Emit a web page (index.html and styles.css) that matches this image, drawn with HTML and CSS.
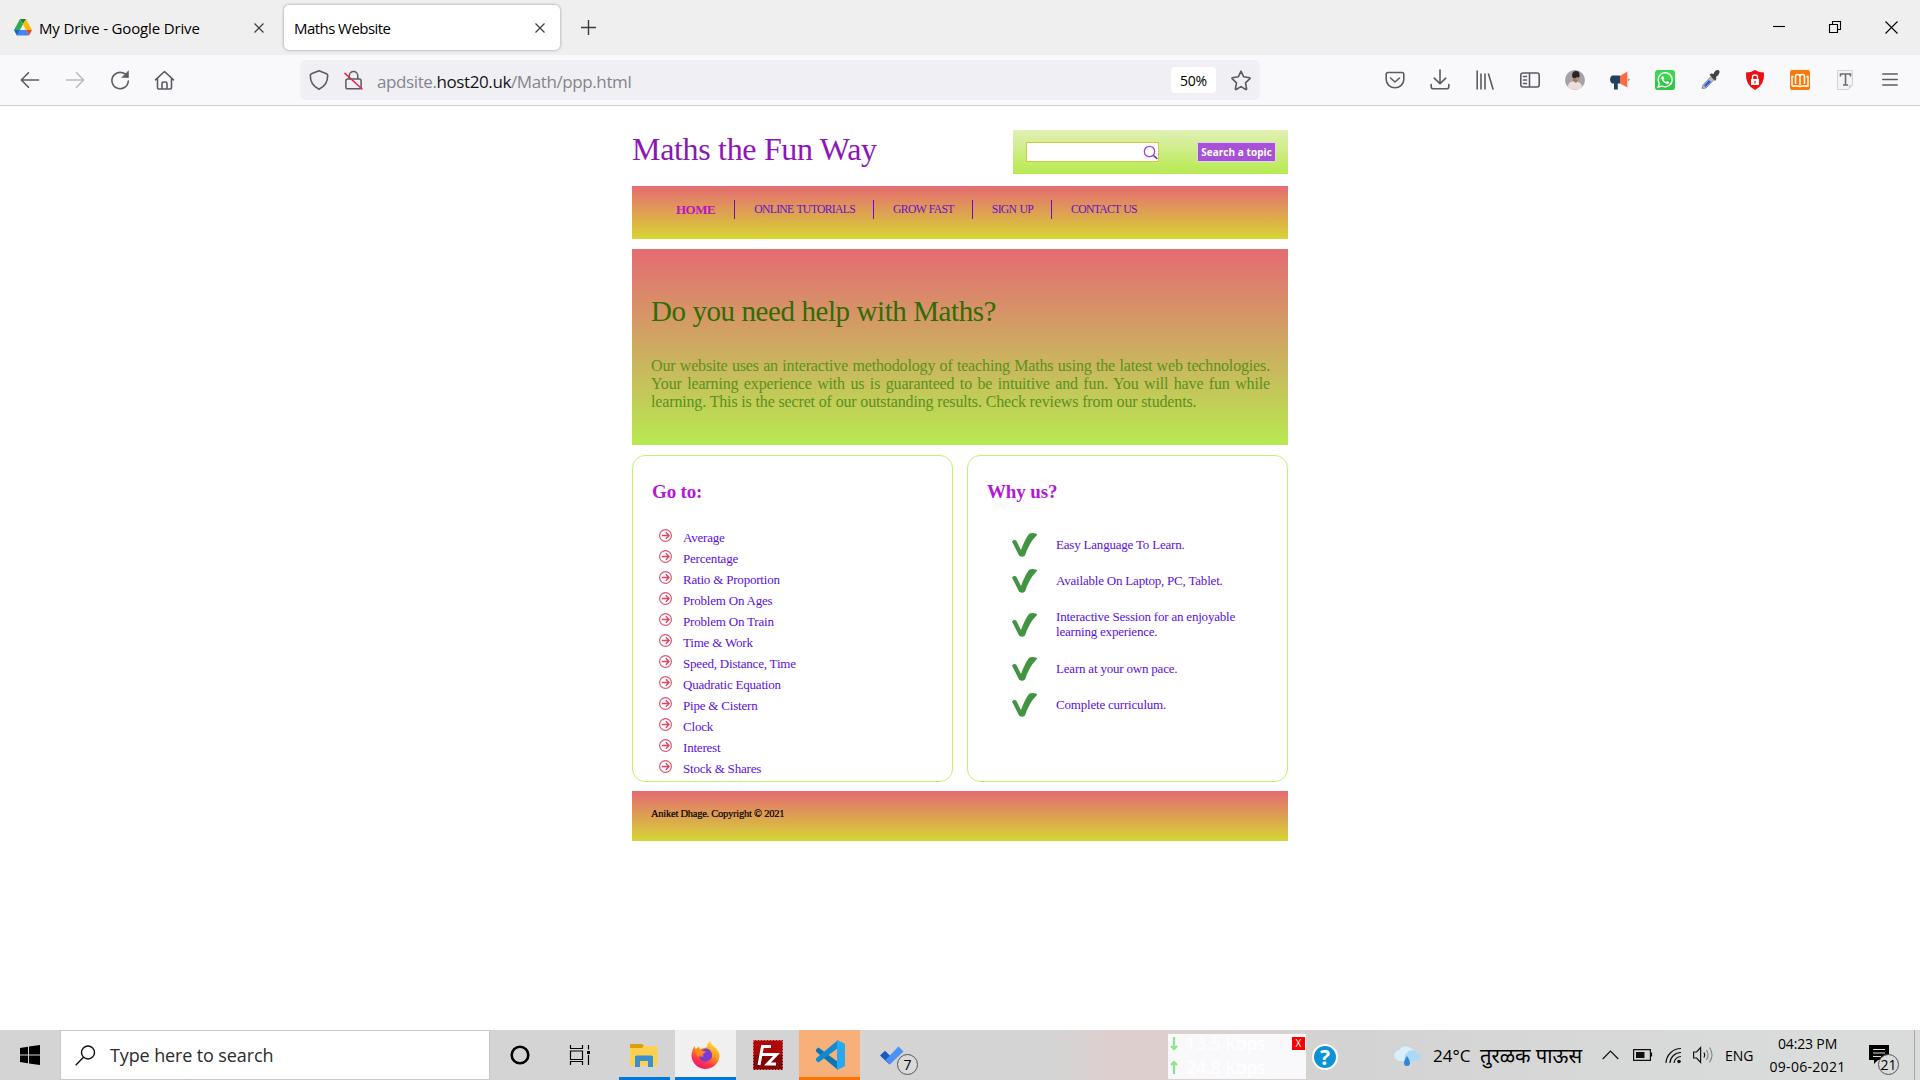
FILE: index.html
```html
<!DOCTYPE html>
<html lang="en">
<head>
<meta charset="utf-8">
<title>Maths Website</title>
<link rel="stylesheet" href="styles.css">
</head>
<body>
<svg width="0" height="0" class="defs">
  <symbol id="arrow" viewBox="0 0 13 13"><circle cx="6.500" cy="6.500" r="5.900" fill="none" stroke="#df5570" stroke-width="1.200"/><path d="M2.800 6.500h7M6.800 3.300l3.200 3.200-3.200 3.200" fill="none" stroke="#dc4664" stroke-width="1.400"/></symbol>
  <symbol id="check" viewBox="0 0 25 24"><path d="M0 8.500Q2 6.300 4.200 7.500L9 17Q13 6 17.200.8 20-.6 24.500.8q.9.700 0 1.700Q17 10 13 22.500q-.7 1.500-4.500 1Q7 23 6.500 21.500z" fill="#429442"/></symbol>
</svg>
<header class="tabstrip">
  <div class="tab tab-drive">
    <svg class="drive" width="18" height="17" viewBox="0 0 18 17"><path d="M6 0h6L9 5.300z" fill="#188038"/><path d="M6 0 0 11l3 5.500L9 5.300z" fill="#34a853"/><path d="M12 0l6 11h-6L9 5.300z" fill="#fbbc04"/><path d="M3 16.500 6 11h6l3 5.500z" fill="#4285f4"/><path d="M0 11h6l-3 5.500z" fill="#1967d2"/><path d="M12 11h6l-3 5.500z" fill="#ea4335"/></svg>
    <span class="tab-title">My Drive - Google Drive</span>
    <svg class="x" width="10" height="10" viewBox="0 0 10 10"><path d="M.5.5l9 9M9.500.5l-9 9"/></svg>
  </div>
  <div class="tab tab-active">
    <span class="tab-title">Maths Website</span>
    <svg class="x" width="10" height="10" viewBox="0 0 10 10"><path d="M.5.5l9 9M9.500.5l-9 9"/></svg>
  </div>
  <svg class="plus" width="15" height="15" viewBox="0 0 15 15"><path d="M7.500 0v15M0 7.500h15"/></svg>
  <div class="window-buttons">
    <svg width="12" height="12" viewBox="0 0 12 12"><path d="M0 5.500h12"/></svg>
    <svg width="12" height="12" viewBox="0 0 12 12"><path d="M.5 3.500h8v8h-8zM3.500 3.500v-3h8v8h-3"/></svg>
    <svg width="13" height="13" viewBox="0 0 13 13"><path d="M.5.5l12 12M12.500.5l-12 12"/></svg>
  </div>
</header>

<div class="toolbar">
  <div class="nav-buttons">
    <svg class="ic" viewBox="0 0 20 20"><path d="M18.500 10H1.300M8.500 2.800 1.300 10l7.200 7.200"/></svg>
    <svg class="ic dim" viewBox="0 0 20 20"><path d="M1.500 10h17.200M11.500 2.800l7.200 7.200-7.200 7.200"/></svg>
    <svg class="ic" viewBox="0 0 20 20"><path d="M17.500 7A8.200 8.200 0 1 0 18.300 11"/><path d="M18.500 1v6.500H12z" class="solid"/></svg>
    <svg class="ic" viewBox="0 0 20 20"><path d="M.5 9.800 9.500 1.500l9 8.300M2.500 8.500v9.300q0 1.200 1.200 1.200h11.600q1.200 0 1.200-1.200V8.500M7 19v-5.500q0-1.500 1.500-1.500h2q1.500 0 1.500 1.500V19"/></svg>
  </div>
  <div class="urlbar">
    <svg class="ic shield" viewBox="0 0 20 20"><path d="M10 .8l7.500 3q1.200.5 1.200 1.800c0 6-2.700 11-8.700 13.600C4 16.600 1.300 11.600 1.300 5.600q0-1.300 1.200-1.800z"/></svg>
    <svg class="ic lock" viewBox="0 0 20 20"><path d="M5.500 9V5.500a4.500 4.500 0 0 1 9 0V9M4 9h12q2 0 2 2v6.500q0 1.800-2 1.800H4q-2 0-2-1.800V11q0-2 2-2z"/><path d="M1 3l18 16.500" class="slash"/></svg>
    <span class="url">apdsite.<b>host20.uk</b>/Math/ppp.html</span>
    <span class="zoom">50%</span>
    <svg class="ic star" viewBox="0 0 20 20"><path d="M10 1.200l2.700 5.600 6 .9q.6.300.2.900l-4.400 4.200 1.100 6.200q-.1.600-.8.500L10 16.600l-4.800 2.900q-.7.100-.8-.5l1.100-6.200L1.100 8.600q-.4-.6.200-.9l6-.9z"/></svg>
  </div>
  <div class="extensions">
    <svg class="ic" viewBox="0 0 20 20"><path d="M3 2.500h14q1.800 0 1.800 1.800v5.200a8.800 8.300 0 0 1-17.600 0V4.300Q1.200 2.500 3 2.500zM5.500 8l4.500 4 4.500-4"/></svg>
    <svg class="ic" viewBox="0 0 20 20"><path d="M10 0v13.500M4.200 8.200l5.800 5.500 5.800-5.500M1.200 14.500v2.200q0 2 2 2h13.600q2 0 2-2v-2.200"/></svg>
    <svg class="ic" viewBox="0 0 20 20"><path d="M2.200 1v18M6 4v15M10 4v15M13.500 4l4.500 15"/></svg>
    <svg class="ic" viewBox="0 0 20 20"><path d="M3 3h14q2.200 0 2.200 2.200v9.600q0 2.200-2.200 2.200H3Q.8 17 .8 14.800V5.200Q.8 3 3 3zM9.500 3v14M3.500 6.500h3M3.500 10h3M3.500 13.500h3"/></svg>
    <svg class="px" viewBox="0 0 20 20"><circle cx="10" cy="10" r="10" fill="#a4a3aa"/><path d="M3 17q0-4.500 4-5.500l4-1 3 2q3 1 3 4.500a10 10 0 0 1-14 0z" fill="#eadfdc"/><path d="M8 7h5v4l-2 2-3-2z" fill="#a37564"/><path d="M7 6q0-5 4-5t3.500 5l-.7 2H8z" fill="#2c2526"/><path d="M10.500 6.500h3.500v4h-2.500z" fill="#b98a78"/><path d="M10 5.500h4.200v1.800H10z" fill="#221f22"/></svg>
    <svg class="px" viewBox="0 0 20 20"><path d="M2 5.500h8v8H7.800v6H4v-6H2Q0 12 0 9.500t2-4z" fill="#25405c"/><path d="M10 6l7.500-4.500v16L10 13.500z" fill="#ff6a3a"/><path d="M18 1v18" stroke="#c7e9ff"/><path d="M18.500 8.500q2 1 0 2.500z" fill="#25405c"/></svg>
    <svg class="px" viewBox="0 0 20 20"><rect width="20" height="20" rx="3" fill="#3bd64b"/><path d="M0 10h20v7q0 3-3 3H3q-3 0-3-3z" fill="#27b93a" opacity=".55"/><path d="M3.200 17l1-3.600A7 7 0 1 1 7 16z" fill="none" stroke="#fff" stroke-width="1.400"/><path d="M7 6.500l1.200-.3 1 2.200-.8 1q1 1.800 2.700 2.500l.9-1 2.200 1-.2 1.300q-1.300 1.200-3.200.3Q7.500 12 6.500 9q-.3-1.500.5-2.500z" fill="#fff"/></svg>
    <svg class="px" viewBox="0 0 20 20"><path d="M2 18.500l1-3.500 8-8.500 3 3L6 18z" fill="#b8bac2" stroke="#8b8d96"/><path d="M4 15.500l5-5.500 2 2-5.500 5z" fill="#2a5ee0"/><path d="M9.500 4.500l2-1 2 .5q1.500-4 4-4t2 2.500-3.500 4.500l.3 2-1.300 2z" fill="#414247"/></svg>
    <svg class="px" viewBox="0 0 20 20"><path d="M10 0q4 2.500 9 2.500 1 12.500-9 17.500Q0 15 1 2.500 6 2.500 10 0z" fill="#ef0f12"/><path d="M6 9h8v6H6z" fill="#fff"/><path d="M7.500 9V7q0-2 2.500-2t2.500 2v2" fill="none" stroke="#fff" stroke-width="1.300"/><path d="M10 11v2.500" stroke="#ef0f12" stroke-width="1.200"/></svg>
    <svg class="px" viewBox="0 0 20 20"><rect width="20" height="20" rx="2" fill="#f97a06"/><path d="M2 16V6.500h1.500M16.500 6.500H18V16h-6.500l-1.500.7-1.500-.7H2M5.500 14V6q0-1.500 2.200-1.500T10 6v9M10 6q0-1.500 2.300-1.500T14.500 6v8" fill="none" stroke="#fff" stroke-width="1.500"/></svg>
    <svg class="px" viewBox="0 0 20 20"><path d="M2.500.5h15V15l-4 4.500h-11z" fill="#f4f4f4" stroke="#d2d2d2"/><path d="M13.500 19.500V15h4z" fill="#d5d5d5"/><path d="M5.500 6.500V4h10v2.500M10.500 4v11M8 15h5" fill="none" stroke="#686c73" stroke-width="1.600"/></svg>
    <svg class="ic" viewBox="0 0 20 20"><path d="M2.800 4h14.400M2.800 9.500h14.400M2.800 15h14.400"/></svg>
  </div>
</div>

<main class="viewport">
  <div class="page">
    <div class="masthead">
      <h1 class="site-title">Maths the Fun Way</h1>
      <div class="search">
        <div class="search-input"><svg width="14" height="15" viewBox="0 0 14 15"><circle cx="5.500" cy="6.500" r="5.200" fill="none" stroke="#9a47c9" stroke-width="1.300"/><path d="M9.500 10.500l1.500 1.500M11 11.500l2.300 2.500" fill="none" stroke="#7b22b8" stroke-width="1.500"/></svg></div>
        <div class="search-button">Search a topic</div>
      </div>
    </div>
    <nav class="menu">
      <a class="home">HOME</a><a>ONLINE TUTORIALS</a><a>GROW FAST</a><a>SIGN UP</a><a>CONTACT US</a>
    </nav>
    <section class="hero">
      <h2>Do you need help with Maths?</h2>
      <p><span>Our website uses an interactive methodology of teaching Maths using the latest web technologies.</span>
      <span>Your learning experience with us is guaranteed to be intuitive and fun. You will have fun while</span>
      <span class="last">learning. This is the secret of our outstanding results. Check reviews from our students.</span></p>
    </section>
    <div class="panels">
      <section class="panel">
        <h3>Go to:</h3>
        <ul class="topics">
          <li><svg><use href="#arrow"/></svg>Average</li>
          <li><svg><use href="#arrow"/></svg>Percentage</li>
          <li><svg><use href="#arrow"/></svg>Ratio &amp; Proportion</li>
          <li><svg><use href="#arrow"/></svg>Problem On Ages</li>
          <li><svg><use href="#arrow"/></svg>Problem On Train</li>
          <li><svg><use href="#arrow"/></svg>Time &amp; Work</li>
          <li><svg><use href="#arrow"/></svg>Speed, Distance, Time</li>
          <li><svg><use href="#arrow"/></svg>Quadratic Equation</li>
          <li><svg><use href="#arrow"/></svg>Pipe &amp; Cistern</li>
          <li><svg><use href="#arrow"/></svg>Clock</li>
          <li><svg><use href="#arrow"/></svg>Interest</li>
          <li><svg><use href="#arrow"/></svg>Stock &amp; Shares</li>
        </ul>
      </section>
      <section class="panel">
        <h3>Why us?</h3>
        <ul class="reasons">
          <li><svg><use href="#check"/></svg><span>Easy Language To Learn.</span></li>
          <li><svg><use href="#check"/></svg><span>Available On Laptop, PC, Tablet.</span></li>
          <li class="two"><svg><use href="#check"/></svg><span>Interactive Session for an enjoyable<br>learning experience.</span></li>
          <li><svg><use href="#check"/></svg><span>Learn at your own pace.</span></li>
          <li><svg><use href="#check"/></svg><span>Complete curriculum.</span></li>
        </ul>
      </section>
    </div>
    <footer class="foot">Aniket Dhage. Copyright © 2021</footer>
  </div>
</main>

<div class="taskbar">
  <div class="start"><svg width="20" height="20" viewBox="0 0 20 20"><path d="M0 3l8-1.200v7.700H0zM9 1.600 20 0v9.500H9zM0 10.500h8v7.700L0 17zM9 10.500h11V20L9 18.400z"/></svg></div>
  <div class="task-search">
    <svg width="21" height="21" viewBox="0 0 21 21"><circle cx="13" cy="7.500" r="6.500"/><path d="M8.500 12.200.7 20.300"/></svg>
    <span class="t-search">Type here to search</span>
  </div>
  <div class="cell"><svg width="20" height="20" viewBox="0 0 20 20"><circle cx="10" cy="10" r="8.300" fill="none" stroke="#000" stroke-width="2.600"/></svg></div>
  <div class="cell"><svg width="21" height="20" viewBox="0 0 21 20"><path d="M1.500 0v3.500h12V0M1.500 6h12v8.500h-12zM1.500 20v-3.500h12V20M19.500 0v4.500M19.500 10v10" fill="none" stroke="#000" stroke-width="1.200"/><path d="M18 6h3v3h-3z"/></svg></div>
  <div class="apps">
    <div class="app open narrow"><svg width="28" height="24" viewBox="0 0 28 24"><path d="M0 2q0-1 1-1h11l2 2-2 3H0z" fill="#e09c0a"/><path d="M0 5h12l2-2h12.500q1 0 1 1v18q0 1-1 1h-25.500q-1 0-1-1z" fill="#ffd04f"/><path d="M5 24V14q0-1.500 1.500-1.500h15q1.500 0 1.500 1.500v10h-5v-6h-8v6z" fill="#3a8fd0"/></svg></div>
    <div class="app open front"><svg width="29" height="29" viewBox="0 0 29 29"><defs><linearGradient id="ff" x1=".8" y1="0" x2=".3" y2="1"><stop offset="0" stop-color="#ffe83a"/><stop offset=".45" stop-color="#ff9220"/><stop offset=".75" stop-color="#ff3647"/><stop offset="1" stop-color="#e01681"/></linearGradient></defs><path d="M16 6q0-4 3-6 1 3 4 5.500 5.500 4 5.500 10A14 13.500 0 1 1 1 11q1-4 2.500-6 .3 2 1.300 3L8 5.500q0 2 1.500 2.500z" fill="url(#ff)"/><path d="M9 11q3-4 7-3.500 4.500 1.500 5 6t-4 6.500-8-2q-1-2 0-3 2 2 4 0z" fill="#7b3bd1"/><path d="M4 9q4-2 8 1 2 0 3 1-3 1.500-4 3-3 0-3 2-4-2-4-7z" fill="#ff8a20"/></svg></div>
    <div class="app"><svg width="30" height="30" viewBox="0 0 30 30"><rect width="30" height="30" fill="#ad0707"/><path d="M0 30V15h30v15z" fill="#820404"/><rect x=".5" y=".5" width="29" height="29" fill="none" stroke="#ebb" stroke-dasharray="1 2"/><path d="M6 25 9.500 6.500h8.500M7.500 14.500h7.500M14 14.500h9.500l-9 9.500h8.500" fill="none" stroke="#fff" stroke-width="3"/></svg></div>
    <div class="app alert"><svg width="30" height="30" viewBox="0 0 30 30"><path d="M1 9.500 3.500 7.500 23 22v8L1.500 12q-1-1.300-.5-2.500z" fill="#0877b9"/><path d="M1 20.500 3.500 22.500 23 8V0L1.500 18q-1 1.300-.5 2.500z" fill="#118bd0"/><path d="M22 0l7 3.300q1 .6 1 1.700v20q0 1.200-1 1.700L22 30z" fill="#28a8f0"/></svg></div>
    <div class="app"><svg width="24" height="19" viewBox="0 0 24 19"><path d="M0 9.500 5 4.700l9 9L9.500 18.500z" fill="#185abd"/><path d="M5.500 14 18.500.5 23.500 5.500 9.700 18.600z" fill="#4a92f5"/></svg><span class="badge">7</span></div>
  </div>
  <div class="netspeed">
    <div><svg width="8" height="13" viewBox="0 0 8 13"><path d="M4 0v10M1 9l3 3 3-3"/></svg><span>13.5 Kbps</span></div>
    <div><svg width="8" height="13" viewBox="0 0 8 13"><path d="M4 13V3M1 4l3-3 3 3"/></svg><span>24.8 Kbps</span></div>
    <span class="net-close">X</span>
  </div>
  <div class="help">?</div>
  <div class="weather">
    <svg width="26" height="21" viewBox="0 0 26 21"><path d="M6 16a5.500 5.500 0 0 1-.5-11A7 6.500 0 0 1 17 3.500a5 5 0 0 1 4 3 5 5 0 0 1-.5 9.500z" fill="#d9f0fc"/><path d="M12 16a5 5 0 0 1 1-8 6 6 0 0 1 10 0 4 4 0 0 1-1 8z" fill="#acd8f7"/><path d="M13 11q3 4.500 3 7a3 3 0 0 1-6 0q0-2.500 3-7z" fill="#2e86dc"/></svg>
    <span class="t-deg">24°C</span><span class="t-hi" lang="mr">तुरळक पाऊस</span>
  </div>
  <div class="tray">
    <svg width="17" height="10" viewBox="0 0 17 10"><path d="M.7 9 8.500 1l7.800 8"/></svg>
    <svg class="s-bat" width="20" height="12" viewBox="0 0 20 12"><path d="M.6.6h16.800v10.800H.6zM18.500 3.500v4"/><path d="M3 3h8.500v6H3z" class="fill"/></svg>
    <svg class="s-wifi" width="17" height="17" viewBox="0 0 17 17"><path d="M1 16A15 15 0 0 1 16 1.500M5 16A11 11 0 0 1 16 5.500M9 16a7 7 0 0 1 7-6.500"/><circle cx="14" cy="14.500" r="1.800" class="fill"/></svg>
    <svg class="s-vol" width="21" height="18" viewBox="0 0 21 18"><path d="M.6 6h3l4-4.500v15l-4-4.500h-3zM11 6.500q1.500 2.500 0 5"/><path d="M13.500 4q3 5 0 10M16.500 1.500q5 7.500 0 15" opacity=".4"/></svg>
    <span class="t-eng">ENG</span>
  </div>
  <div class="clock"><span class="t-time">04:23 PM</span><span class="t-date">09-06-2021</span></div>
  <div class="notif"><svg width="20" height="20" viewBox="0 0 20 20"><path d="M0 0h20v15H9l-4 4v-4H0z"/><path d="M4 4.500h12M4 8h12M4 11.500h8" stroke="#ddd" stroke-width="1.200"/></svg><span class="badge">21</span></div>
  <div class="show-desktop"></div>
</div>
</body>
</html>
```
FILE: styles.css
```css
* { box-sizing: border-box; }
body { margin: 0; width: 1920px; height: 1080px; overflow: hidden; display: flex; flex-direction: column; background: #fff; color: #000; font-family: "Open Sans", "Noto Sans", sans-serif; }
svg { display: block; flex: none; overflow: visible; }
.defs { position: absolute; }
ul { list-style: none; margin: 0; padding: 0; }
h1, h2, h3, p { margin: 0; font-weight: 400; }
span { white-space: nowrap; }

/* browser tabs */
.tabstrip { height: 55px; flex: none; display: flex; align-items: center; background: #efefef; }
.tab { height: 45px; display: flex; align-items: center; font-size: 15px; }
.tab-drive { width: 284px; padding: 0 20px 0 14px; }
.tab-drive .tab-title { margin-left: 7px; letter-spacing: -.15px; }
.tab-title { flex: 1; }
.tab-active { width: 276px; padding: 0 15px 0 10px; background: #fff; border-radius: 5px; box-shadow: 0 0 3px #8f8f9d; }
.tab-active .tab-title { letter-spacing: -.55px; }
.x, .plus { fill: none; stroke: #3c3b42; stroke-width: 1.2; }
.plus { margin-left: 21px; stroke-width: 1.4; }
.window-buttons { margin-left: auto; display: flex; gap: 44px; padding-right: 22px; fill: none; stroke: #000; stroke-width: 1.1; }

/* toolbar */
.toolbar { height: 51px; flex: none; display: flex; align-items: center; background: #f9f9fb; border-bottom: 1px solid #ccccd1; }
.ic, .px { width: 20px; height: 20px; }
.ic { fill: none; stroke: #5b5b66; stroke-width: 1.6; stroke-linejoin: round; stroke-linecap: round; }
.ic .solid { fill: #5b5b66; stroke-width: .5; }
.dim { opacity: .4; }
.nav-buttons { width: 300px; padding-left: 20px; display: flex; gap: 25px; }
.urlbar { width: 960px; height: 40px; padding-left: 9px; display: flex; align-items: center; background: #f0f0f4; border-radius: 5px; }
.lock { margin-left: 15px; width: 19px; }
.ic .slash { stroke: #e22850; }
.url { margin-left: 14px; font-size: 17px; letter-spacing: -.4px; color: #85848c; position: relative; top: 1px; }
.url b { font-weight: 400; color: #15141a; }
.zoom { margin-left: auto; width: 45px; height: 26px; display: grid; place-items: center; background: #fff; border-radius: 4px; font-size: 14px; letter-spacing: -.2px; }
.star { margin: 0 9px 0 15px; }
.extensions { margin-left: 125px; display: flex; gap: 25px; }

/* web page */
.viewport { flex: 1; display: flex; justify-content: center; padding-top: 24px; font-family: "Liberation Serif", serif; }
.page { width: 656px; display: flex; flex-direction: column; }
.masthead { height: 44px; display: flex; justify-content: space-between; margin-bottom: 12px; }
.site-title { font-size: 32px; line-height: 39px; letter-spacing: -.32px; color: #8b17b8; }
.search { width: 275px; height: 44px; padding: 0 12px 0 13px; display: flex; justify-content: space-between; align-items: center; background: linear-gradient(#e1f0b4, #b7ea50); }
.search-input { width: 133px; height: 20px; display: flex; justify-content: flex-end; align-items: center; background: #fff; border: 1px solid #c9cf3c; }
.search-button { width: 79px; height: 20px; display: grid; place-items: center; background: #a951d6; border: 1px solid #ded3ec; color: #fff; font: bold 10px/17px "Open Sans", sans-serif; letter-spacing: .05px; }
.menu { height: 53px; padding: 14px 0 0 25px; display: flex; background: linear-gradient(#e56b72, #d8d633); font-size: 11.7px; letter-spacing: -.68px; word-spacing: .8px; color: #6610cf; }
.menu a { height: 19px; padding: 0 18px 0 19px; line-height: 19px; border-right: 1px solid #6610cf; }
.menu a:last-child { border: 0; }
.menu .home { padding-right: 19px; font-weight: 700; font-size: 13px; letter-spacing: -.5px; color: #b516c4; }
.hero { height: 196px; margin: 10px 0; padding: 44px 18px 0 19px; background: linear-gradient(#e56b72, #b7ea50); }
.hero h2 { font-size: 29px; line-height: 37px; letter-spacing: -.42px; margin-bottom: 27px; color: #2f6d04; }
.hero p { font-size: 16px; line-height: 18px; letter-spacing: -.15px; color: #5c9020; }
.hero p > span { display: block; text-align: justify; text-align-last: justify; }
.hero p > .last { text-align-last: left; }
.panels { display: flex; gap: 14px; margin-bottom: 9px; }
.panel { width: 321px; height: 327px; padding: 25px 19px 0; border: 1px solid #bdf373; border-radius: 13px; }
.panel h3 { font-size: 19px; line-height: 22px; letter-spacing: -.15px; margin-bottom: 24px; font-weight: 700; color: #b516dc; }
.panel li { display: flex; align-items: center; font-size: 13px; letter-spacing: -.2px; color: #5a10e2; }
.topics li { height: 21px; padding-left: 7px; }
.topics svg { width: 13px; height: 13px; margin: 0 11px 4px 0; }
.reasons li { height: 36px; padding-left: 25px; line-height: 15px; }
.reasons svg { width: 25px; height: 24px; margin-right: 19px; }
.reasons span { margin-bottom: 2px; }
.reasons .two { height: 52px; }
.foot { height: 50px; padding: 14px 19px; line-height: 18px; font-size: 10.5px; letter-spacing: -.25px; -webkit-text-stroke: .2px #000; background: linear-gradient(#e56b72, #d5d533); }

/* Windows taskbar */
.taskbar { height: 50px; flex: none; display: flex; background: linear-gradient(90deg, #d4d4d4 1050px, #decfcf 1110px, #decfcf 1160px, #d3d3d3 1350px, #dadcdb 1800px); }
.start { width: 60px; display: grid; place-items: center; }
.task-search { width: 430px; display: flex; align-items: center; padding-left: 14px; background: #fff; border: 1px solid #c8c8c8; }
.task-search svg { fill: none; stroke: #111; stroke-width: 1.4; }
.t-search { margin-left: 14px; font-size: 18px; letter-spacing: -.12px; color: #2b2b2b; }
.cell { width: 60px; display: grid; place-items: center; }
.cell:nth-child(4) svg { margin-right: 1px; }
.apps { display: flex; gap: 1px; margin-left: 3px; }
.app { width: 61px; position: relative; display: grid; place-items: center; }
.open.narrow { background: linear-gradient(#0078d7, #0078d7) 6px 100% / 51px 3px no-repeat; }
.front { background: #f0f0f0; box-shadow: inset 0 -3px #0078d7; }
.alert { background: #f7b07a; box-shadow: inset 0 -3px #ff7300; }
.badge { position: absolute; width: 21px; height: 21px; border: 1px solid #555; border-radius: 50%; background: #dadada; font-size: 14px; line-height: 19px; display: flex; justify-content: center; }
.app .badge { left: 36px; top: 24px; }
.netspeed { position: relative; width: 138px; height: 45px; margin: 4px 0 0 246px; padding-left: 2px; background: #f9f9fb; color: #fff; font-size: 17.5px; }
.netspeed div { height: 22px; display: flex; align-items: center; gap: 8px; line-height: 22px; }
.netspeed div:first-child { margin-top: -2px; }
.netspeed div:nth-child(2) { margin-top: 2px; }
.netspeed svg { fill: none; stroke: #86e886; stroke-width: 2.2; }
.net-close { position: absolute; left: 124px; top: 3px; width: 13px; height: 13px; background: #f00; font-size: 10px; line-height: 13px; text-align: center; }
.help { width: 26px; height: 26px; margin: 14px 0 0 6px; border: 2px solid #fff; border-radius: 50%; background: #0c93d6; color: #fff; font-weight: 700; font-size: 21px; line-height: 22px; text-align: center; }
.weather { margin-left: 56px; display: flex; align-items: center; font-size: 17px; }
.t-deg { margin-left: 13px; width: 47px; }
.t-hi { width: 122px; font-size: 20.2px; line-height: 24px; }
.tray { display: flex; align-items: center; font-size: 14px; fill: none; stroke: #111; stroke-width: 1.2; }
.tray .fill { fill: #111; stroke: none; }
.s-bat { margin-left: 14px; }
.s-wifi { margin-left: 12px; }
.s-vol { margin-left: 11px; }
.t-eng { margin-left: 11px; width: 45px; }
.clock { width: 75px; display: flex; flex-direction: column; align-items: center; font-size: 14px; line-height: 23px; padding-top: 2px; margin-right: 24px; }
.t-time { letter-spacing: -.15px; }
.t-date { letter-spacing: .3px; }
.notif { position: relative; padding-top: 15px; }
.notif .badge { left: 9px; top: 24px; }
.show-desktop { margin-left: auto; width: 6px; border-left: 1px solid #a9a9a9; }
```
